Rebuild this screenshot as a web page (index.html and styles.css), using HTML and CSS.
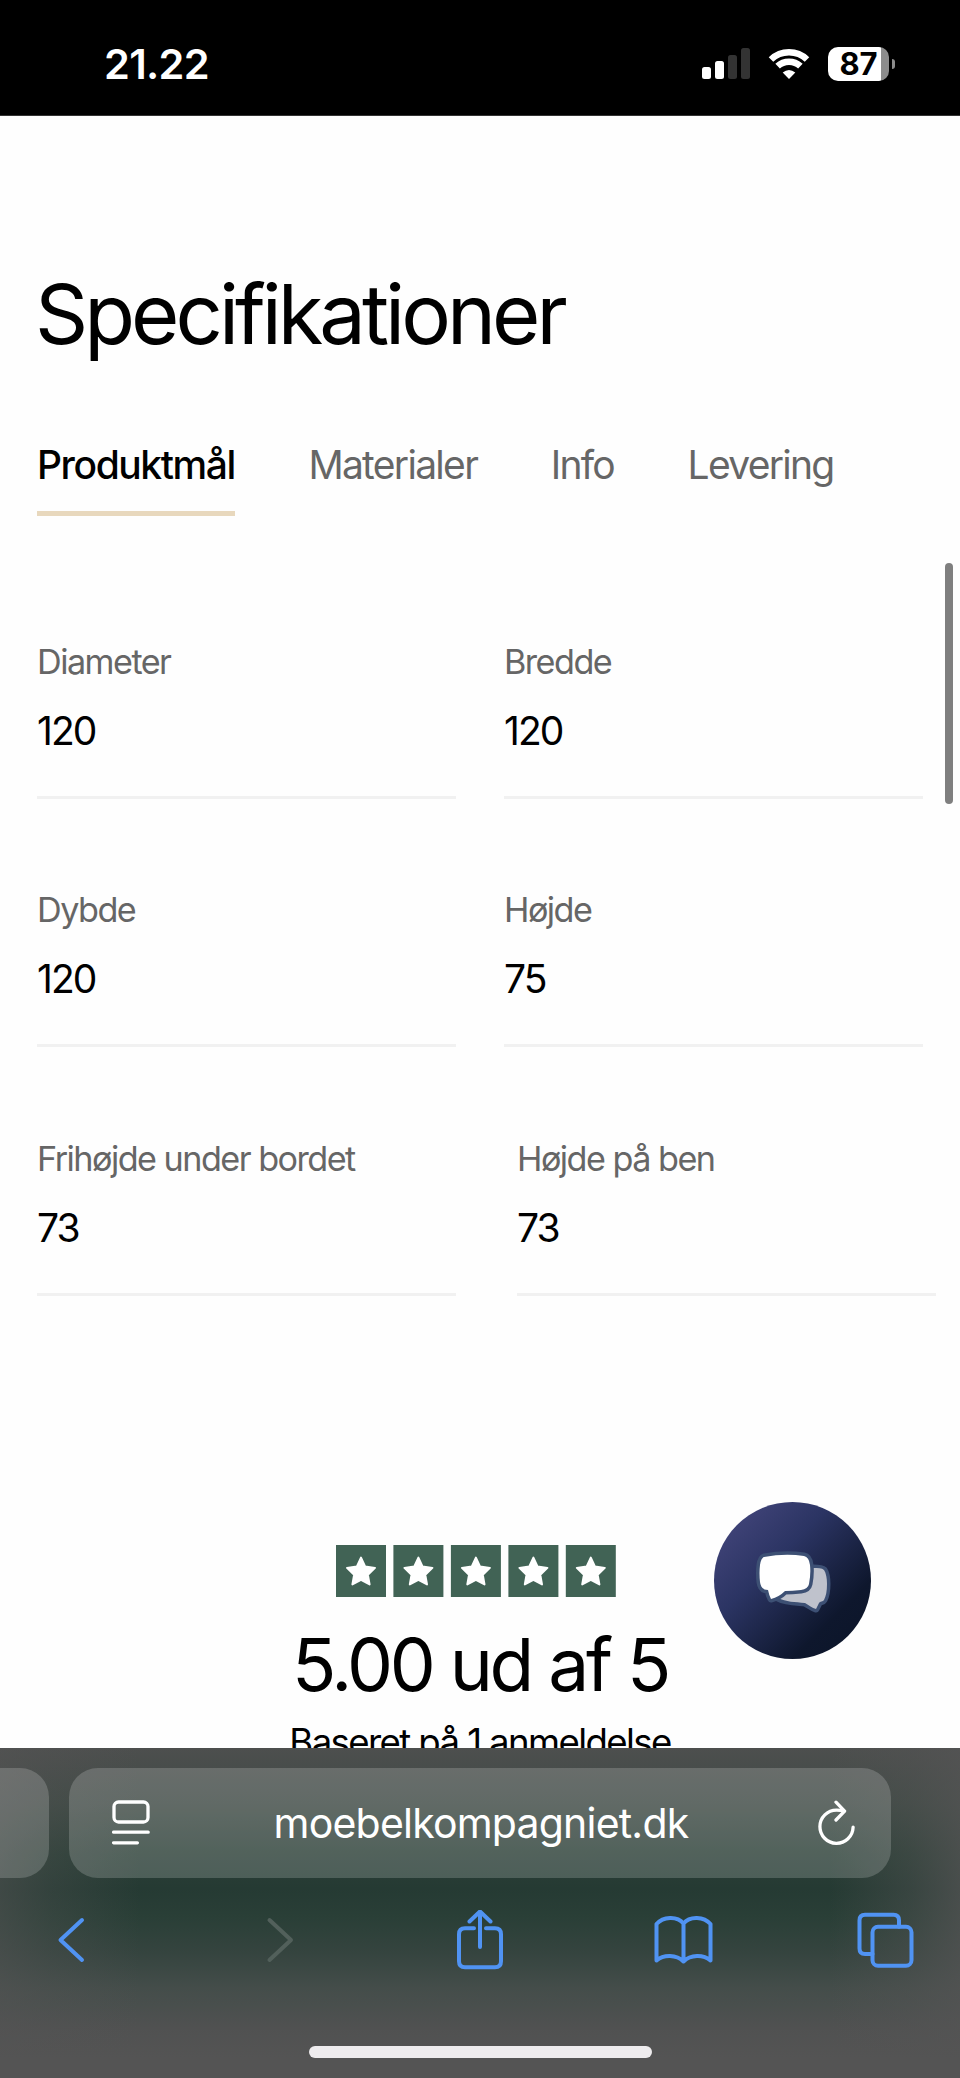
FILE: index.html
```html
<!DOCTYPE html>
<html lang="da">
<head>
	<title>Specifikationer</title>
	<meta charset="utf-8">
	<link rel="stylesheet" href="styles.css">
</head>

<body>
	<header class="status">
		<span class="time">21.22</span>
		<div class="status-icons">
			<svg class="signal" viewBox="0 0 48 31">
				<rect x="0" y="19" width="9" height="12" rx="2.5"/>
				<rect x="13" y="13" width="9" height="18" rx="2.5"/>
				<rect class="off" x="26" y="7" width="9" height="24" rx="2.5"/>
				<rect class="off" x="39" y="0" width="9" height="31" rx="2.5"/>
			</svg>
			<svg class="wifi" viewBox="0 0 42 31">
				<path d="M3 11.5a26 26 0 0 1 36 0M9.6 18.2a16.5 16.5 0 0 1 22.8 0"/>
				<path class="dot" d="M21 31l-6.3-6.4q6.3-5 12.6 0z"/>
			</svg>
			<div class="battery">87</div>
		</div>
	</header>

	<main>
		<h1>Specifikationer</h1>

		<nav class="tabs">
			<a class="tab active">Produktmål</a>
			<a class="tab">Materialer</a>
			<a class="tab">Info</a>
			<a class="tab">Levering</a>
		</nav>

		<dl class="specs">
			<div class="spec"><dt>Diameter</dt><dd>120</dd></div>
			<div class="spec"><dt>Bredde</dt><dd>120</dd></div>
			<div class="spec"><dt>Dybde</dt><dd>120</dd></div>
			<div class="spec"><dt>Højde</dt><dd>75</dd></div>
			<div class="spec"><dt>Frihøjde under bordet</dt><dd>73</dd></div>
			<div class="spec shifted"><dt>Højde på ben</dt><dd>73</dd></div>
		</dl>

		<section class="rating">
			<svg class="stars" viewBox="0 0 280 52">
				<defs>
					<g id="star">
						<rect width="50" height="52"/>
						<path d="M25 12.6l4.2 9 9.8 1.3-7.1 6.9 1.7 9.6-8.6-4.6-8.6 4.6 1.7-9.6-7.1-6.9 9.8-1.3z"/>
					</g>
				</defs>
				<use href="#star"/>
				<use href="#star" x="57.4"/>
				<use href="#star" x="114.9"/>
				<use href="#star" x="172.4"/>
				<use href="#star" x="229.8"/>
			</svg>
			<p class="score">5.00 ud af 5</p>
			<p class="based">Baseret på 1 anmeldelse</p>
		</section>
	</main>

	<div class="scrollbar"></div>

	<button class="chat">
		<svg viewBox="14 12 157 157">
			<path class="back" d="M113 78c5 0 9 0 11 2 2 3 3 8 3 14 0 7-1 12-3 16-1 2-4 1-5 3l-3 6c-4-1-7-4-11-6-10-1-19-1-27-5z"/>
			<path class="front" d="M64 67q21-4 40-1 5 1 6 9 1 9-1 19-1 5-8 6-9 1-16 1-6 6-14 8-2-4-3-9-7 0-8-8-1-9 0-17 1-7 4-8z"/>
		</svg>
	</button>

	<footer class="browser">
		<div class="address-row">
			<div class="prev-tab"></div>
			<div class="address">
				<svg viewBox="0 0 38 46">
					<rect x="2" y="2" width="34" height="20" rx="4.5"/>
					<path d="M1.6 32.2h34.6M1.6 42.8h23.8"/>
				</svg>
				<span>moebelkompagniet.dk</span>
				<svg viewBox="0 0 38 46">
					<path d="M35.1 27.2a16.6 16.6 0 1 1-16.6-17.1q4.400 0 7.600 1"/>
					<path d="M18 2.200l8.600 8.900-8.600 8.900"/>
				</svg>
			</div>
		</div>
		<nav class="toolbar">
			<svg viewBox="0 0 60 60"><path d="M36 10L14.500 30 36 50"/></svg>
			<svg class="disabled" viewBox="0 0 60 60"><path d="M20.500 10L42 30 20.500 50"/></svg>
			<svg viewBox="0 0 60 60">
				<path d="M23 18.200h-9q-6 0-6 6v27q0 6 6 6h30q6 0 6-6v-27q0-6-6-6h-9"/>
				<path d="M29 37V1.500M18.500 11.500L29 1.500l10.500 10"/>
			</svg>
			<svg viewBox="0 0 60 60">
				<path d="M29.500 13.500C23 5.500 9 6.500 2.500 14v36.500c7-6.200 20-6.200 27 1 7-7.200 20-7.200 27-1V14C50 6.500 36 5.500 29.500 13.500zM29.500 13.500v38"/>
			</svg>
			<svg viewBox="0 0 60 60">
				<rect x="16.500" y="16.700" width="39" height="39" rx="5.500"/>
				<path d="M16.500 44H9q-5.500 0-5.500-5.500V10.300q0-5.500 5.500-5.500h28.500q5.500 0 5.500 5.500v6.400"/>
			</svg>
		</nav>
		<div class="home"></div>
	</footer>
</body>
</html>
```
FILE: styles.css
```css
* {
	box-sizing: border-box;
	margin: 0;
}

body {
	position: relative;
	display: flex;
	flex-direction: column;
	width: 960px;
	height: 2078px;
	overflow: hidden;
	background: #fefefe;
	color: #000;
	font-family: Inter, "Liberation Sans", sans-serif;
	font-size: 39px;
	line-height: 48px;
}

svg {
	display: block;
	fill: none;
}

/* status bar */
.status {
	display: flex;
	flex: none;
	align-items: center;
	justify-content: space-between;
	height: 116px;
	padding: 12px 65px 0 104px;
	background: #000;
	border-bottom: 1px solid #333;
	color: #fff;
}

.time {
	font-size: 41.5px;
	font-weight: 600;
	letter-spacing: -0.7px;
}

.status-icons {
	display: flex;
	align-items: center;
}

.signal {
	width: 48px;
	height: 31px;
	margin-right: 18px;
	fill: #fff;
}

.signal .off {
	fill: #333;
}

.wifi {
	width: 42px;
	height: 31px;
	margin-right: 18px;
	stroke: #fff;
	stroke-width: 6.5px;
}

.wifi .dot {
	fill: #fff;
	stroke: none;
}

.battery {
	position: relative;
	width: 61px;
	height: 34px;
	margin-right: 6px;
	border-radius: 10px;
	background: linear-gradient(90deg, #fff 53px, #8c8c8c 53px);
	color: #000;
	font-size: 31px;
	font-weight: 700;
	line-height: 34px;
	text-align: center;
}

.battery::after {
	content: "";
	position: absolute;
	top: 12px;
	right: -6px;
	width: 3px;
	height: 10px;
	border-radius: 0 5px 5px 0;
	background: #8c8c8c;
}

/* product page */
main {
	flex: 1;
	min-height: 0;
	overflow: hidden;
	padding: 148px 37px 0;
}

h1 {
	margin-left: -2px;
	font-size: 83px;
	font-weight: 400;
	line-height: 100px;
	letter-spacing: -4px;
}

.tabs {
	display: flex;
	gap: 73.5px;
	margin-top: 77px;
}

.tab {
	padding-bottom: 22px;
	border-bottom: 5px solid transparent;
	color: #666;
	letter-spacing: -1.7px;
}

.tab.active {
	border-color: #e8d8bd;
	color: #000;
	font-weight: 500;
	letter-spacing: -1.43px;
}

.specs {
	display: grid;
	grid-template-columns: 419px 419px;
	gap: 90.6px 48px;
	margin-top: 124.5px;
}

.spec {
	padding-bottom: 41px;
	border-bottom: 3px solid #f1f1f1;
}

.shifted {
	margin: 0 -13px 0 13px;
}

dt {
	margin-bottom: 24px;
	color: #666;
	font-size: 34.2px;
	line-height: 42px;
	letter-spacing: -1.53px;
}

dd {
	letter-spacing: -1.9px;
}

.rating {
	display: flex;
	flex-direction: column;
	align-items: center;
	margin-top: 249px;
}

.stars {
	width: 280px;
	height: 52px;
	margin-right: 8px;
	fill: #416355;
}

.stars path {
	fill: #fff;
	stroke: #fff;
	stroke-width: 2px;
	stroke-linejoin: round;
}

.score {
	margin-top: 26px;
	font-size: 73px;
	line-height: 84px;
	letter-spacing: -3.3px;
}

.based {
	margin-top: 11px;
	font-size: 36.6px;
	letter-spacing: -1.6px;
	white-space: nowrap;
}

.scrollbar {
	position: absolute;
	top: 563px;
	left: 945px;
	width: 8px;
	height: 241px;
	border-radius: 4px;
	background: #7f7f7f;
}

.chat {
	position: absolute;
	top: 1502px;
	left: 714px;
	width: 157px;
	height: 157px;
	padding: 0;
	border: 0;
	border-radius: 50%;
	background: linear-gradient(135deg, #414479 10%, #2b3463 38%, #0e172d 75%, #0b1428);
}

.chat path {
	stroke: #3d5074;
	stroke-width: 7px;
	stroke-linejoin: round;
	paint-order: stroke;
}

.chat .back {
	fill: #bfc2cc;
}

.chat .front {
	fill: #fff;
}

/* browser bar */
.browser {
	flex: none;
	height: 330px;
	padding-top: 20px;
	background:
		linear-gradient(90deg, rgba(84, 84, 84, .55), rgba(84, 84, 84, .3) 50px, rgba(84, 84, 84, 0) 140px),
		linear-gradient(270deg, rgba(84, 84, 84, .75), rgba(84, 84, 84, .4) 50px, rgba(84, 84, 84, 0) 130px),
		linear-gradient(#4d4f4e, #484d4b 20px, #3f4a45 55px, #2c4038 105px, #253a33 140px, #2a3f37 170px, #35443f 205px, #444d4a 240px, #505151 280px, #545454 310px);
}

.address-row {
	display: flex;
	gap: 20px;
}

.prev-tab,
.address {
	height: 110px;
	background: rgba(255, 255, 255, .18);
}

.prev-tab {
	width: 49px;
	border-radius: 0 29px 29px 0;
}

.address {
	display: grid;
	grid-template-columns: 38px 1fr 38px;
	align-items: center;
	width: 822px;
	padding: 0 35px 0 43px;
	border-radius: 29px;
	color: #fff;
	font-size: 41px;
	text-align: center;
}

.address span {
	margin-right: 6px;
	letter-spacing: -0.8px;
}

.address svg {
	width: 38px;
	height: 46px;
	stroke: #fff;
	stroke-width: 3.3px;
	stroke-linecap: round;
	stroke-linejoin: round;
}

.toolbar {
	display: flex;
	justify-content: space-between;
	margin: 32px 44px 0 46px;
}

.toolbar svg {
	width: 60px;
	height: 60px;
	stroke: #5093f3;
	stroke-width: 4px;
	stroke-linecap: round;
	stroke-linejoin: round;
}

.toolbar .disabled {
	stroke: #52605b;
}

.home {
	width: 343px;
	height: 12px;
	margin: 76px auto 0;
	border-radius: 6px;
	background: #eeecee;
}
```
